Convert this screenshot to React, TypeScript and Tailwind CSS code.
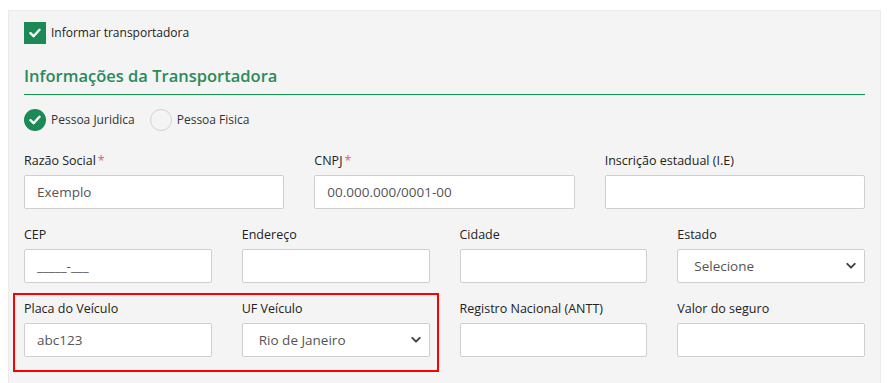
import { useState } from 'react';

const Check = ({ className }: { className?: string }) => (
	<svg viewBox="0 0 12 10" className={className} fill="none">
		<path d="M1.5 5.2 4.6 8.2 10.5 1.8" stroke="white" strokeWidth="2.4" strokeLinecap="round" strokeLinejoin="round" />
	</svg>
);

const Chevron = () => (
	<svg viewBox="0 0 10 7" className="w-[10px] h-[7px] pointer-events-none absolute right-[9px] top-1/2 -translate-y-1/2" fill="none">
		<path d="M1.3 1.4 5 5.1 8.7 1.4" stroke="#444" strokeWidth="2" strokeLinecap="round" strokeLinejoin="round" />
	</svg>
);

const Label = ({ text, required }: { text: string; required?: boolean }) => (
	<label className="block h-[20px] leading-[20px] mb-[4px] text-[12.5px] text-[#222]">
		{text}
		{required && <span className="text-[#e0607e] ml-[2px]">*</span>}
	</label>
);

const Input = ({ label, value, required }: { label: string; value?: string; required?: boolean }) => (
	<div>
		<Label text={label} required={required} />
		<input
			defaultValue={value}
			className="w-full h-[34px] bg-white border border-[#cfcfcf] rounded-[2px] px-[12px] text-[13.5px] text-[#555] outline-none"
		/>
	</div>
);

const Select = ({ label, value }: { label: string; value: string }) => (
	<div>
		<Label text={label} />
		<div className="relative">
			<select
				defaultValue={value}
				className="appearance-none w-full h-[34px] bg-white border border-[#cfcfcf] rounded-[2px] pl-[16px] text-[13.5px] text-[#555] outline-none"
			>
				<option>{value}</option>
			</select>
			<Chevron />
		</div>
	</div>
);

const Radio = ({ checked, label, onClick, className }: { checked: boolean; label: string; onClick: () => void; className?: string }) => (
	<button onClick={onClick} className={`flex items-center gap-[5px] ${className ?? ''}`}>
		<span
			className={
				checked
					? 'w-[22px] h-[22px] rounded-full bg-[#1b8a56] flex items-center justify-center'
					: 'w-[22px] h-[22px] rounded-full border border-[#d2d2d2]'
			}
		>
			{checked && <Check className="w-[12px] h-[10px]" />}
		</span>
		{label}
	</button>
);

export default function App() {
	const [pj, setPj] = useState(true);

	return (
		<div className="w-[887px] h-[383px] bg-white pt-[10px] pl-[8px] overflow-hidden font-['Open_Sans','Noto_Sans',sans-serif]">
			<div className="w-[873px] h-[400px] bg-[#f4f4f4] border border-[#ebebeb] pl-[15px] pr-[15px] pt-[11px]">
				<div className="flex items-center gap-[5px] h-[22px]">
					<span className="w-[22px] h-[22px] bg-[#1b8a56] flex items-center justify-center">
						<Check className="w-[12px] h-[10px]" />
					</span>
					<span className="text-[12px] text-[#222]">Informar transportadora</span>
				</div>

				<h2 className="mt-[22px] text-[16.5px] font-semibold text-[#2b8a5c] leading-[20px]">
					Informações da Transportadora
				</h2>
				<div className="mt-[8px] h-px bg-[#0f9550]" />

				<div className="mt-[14px] flex items-center h-[22px] text-[12px] text-[#333]">
					<Radio checked={pj} label="Pessoa Juridica" onClick={() => setPj(true)} />
					<Radio checked={!pj} label="Pessoa Fisica" onClick={() => setPj(false)} className="ml-[15px]" />
				</div>

				<div className="mt-[20px] grid grid-cols-3 gap-[30px]">
					<Input label="Razão Social" value="Exemplo" required />
					<Input label="CNPJ" value="00.000.000/0001-00" required />
					<Input label="Inscrição estadual (I.E)" />
				</div>

				<div className="mt-[16px] grid grid-cols-4 gap-x-[30px]">
					<Input label="CEP" value="_____-___" />
					<Input label="Endereço" />
					<Input label="Cidade" />
					<Select label="Estado" value="Selecione" />
				</div>

				<div className="mt-[10px] grid grid-cols-4 gap-x-[30px]">
					<div className="col-span-2 -ml-[11px] -mr-[9px] border-2 border-[#ff0000] pl-[9px] pr-[7px] pt-[4px] pb-[13px] grid grid-cols-2 gap-x-[30px]">
						<Input label="Placa do Veículo" value="abc123" />
						<Select label="UF Veículo" value="Rio de Janeiro" />
					</div>
					<div className="pt-[6px]">
						<Input label="Registro Nacional (ANTT)" />
					</div>
					<div className="pt-[6px]">
						<Input label="Valor do seguro" />
					</div>
				</div>
			</div>
		</div>
	);
}
